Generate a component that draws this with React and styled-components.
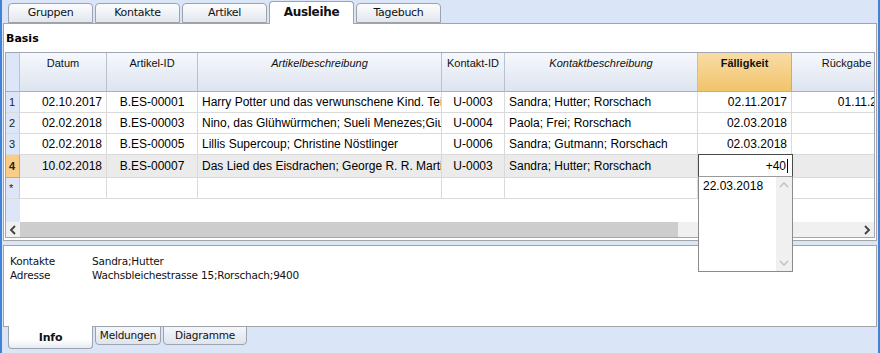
import React from 'react'
import styled, { createGlobalStyle } from 'styled-components'

const columns = [
  { key: 'datum', title: 'Datum', width: 87, align: 'right' },
  { key: 'artikelId', title: 'Artikel-ID', width: 91, align: 'center' },
  { key: 'artikel', title: 'Artikelbeschreibung', width: 244, align: 'left', italic: true },
  { key: 'kontaktId', title: 'Kontakt-ID', width: 63, align: 'center' },
  { key: 'kontakt', title: 'Kontaktbeschreibung', width: 193, align: 'left', italic: true },
  { key: 'faellig', title: 'Fälligkeit', width: 94, align: 'right', active: true },
  { key: 'rueckgabe', title: 'Rückgabe', width: 110, align: 'right' },
]

const rows = [
  { datum: '02.10.2017', artikelId: 'B.ES-00001', artikel: 'Harry Potter und das verwunschene Kind. Teil eins und zwei', kontaktId: 'U-0003', kontakt: 'Sandra; Hutter; Rorschach', faellig: '02.11.2017', rueckgabe: '01.11.2017' },
  { datum: '02.02.2018', artikelId: 'B.ES-00003', artikel: 'Nino, das Glühwürmchen; Sueli Menezes;Giuliano Ferri', kontaktId: 'U-0004', kontakt: 'Paola; Frei; Rorschach', faellig: '02.03.2018', rueckgabe: '' },
  { datum: '02.02.2018', artikelId: 'B.ES-00005', artikel: 'Lillis Supercoup; Christine Nöstlinger', kontaktId: 'U-0006', kontakt: 'Sandra; Gutmann; Rorschach', faellig: '02.03.2018', rueckgabe: '' },
  { datum: '10.02.2018', artikelId: 'B.ES-00007', artikel: 'Das Lied des Eisdrachen; George R. R. Martin', kontaktId: 'U-0003', kontakt: 'Sandra; Hutter; Rorschach', faellig: '', rueckgabe: '', current: true },
]

const topTabs = ['Gruppen', 'Kontakte', 'Artikel', 'Ausleihe', 'Tagebuch']
const bottomTabs = [
  { label: 'Info', width: 85 },
  { label: 'Meldungen', width: 66 },
  { label: 'Diagramme', width: 84 },
]

const GlobalStyle = createGlobalStyle`
  body {
    margin: 0;
    background: #dbe5f8;
    font-family: "Liberation Sans", Arial, sans-serif;
  }
`

const App = () => {
  return (
    <Window>
      <GlobalStyle />
      <TopTabBar>
        {topTabs.map((t) => (
          <TopTab key={t} active={t === 'Ausleihe'}>{t}</TopTab>
        ))}
      </TopTabBar>
      <MainPanel>
        <Title>Basis</Title>
        <Grid>
          <HeaderRow>
            <Corner />
            {columns.map((c) => (
              <HeadCell key={c.key} width={c.width} italic={c.italic} active={c.active}>
                {c.title}
              </HeadCell>
            ))}
          </HeaderRow>
          {rows.map((r, i) => (
            <Row key={i} current={r.current} height={r.current ? 23 : 21}>
              <RowHead current={r.current}>{i + 1}</RowHead>
              {columns.map((c) => (
                <Cell key={c.key} width={c.width} align={c.align}>{r[c.key]}</Cell>
              ))}
            </Row>
          ))}
          <Row height={21}>
            <RowHead>*</RowHead>
            {columns.map((c) => (
              <Cell key={c.key} width={c.width} />
            ))}
          </Row>
          <Filler />
          <HScroll>
            <ScrollArrow>
              <svg width="8" height="10" viewBox="0 0 8 10">
                <path d="M6 1 L2 5 L6 9" fill="none" stroke="#404040" strokeWidth="1.8" />
              </svg>
            </ScrollArrow>
            <Thumb />
            <Track />
            <ScrollArrow>
              <svg width="8" height="10" viewBox="0 0 8 10">
                <path d="M2 1 L6 5 L2 9" fill="none" stroke="#404040" strokeWidth="1.8" />
              </svg>
            </ScrollArrow>
          </HScroll>
        </Grid>
      </MainPanel>
      <InfoPanel>
        <InfoLine><InfoLabel>Kontakte</InfoLabel>Sandra;Hutter</InfoLine>
        <InfoLine><InfoLabel>Adresse</InfoLabel>Wachsbleichestrasse 15;Rorschach;9400</InfoLine>
      </InfoPanel>
      <BottomTabBar>
        {bottomTabs.map((t) => (
          <BottomTab key={t.label} width={t.width} active={t.label === 'Info'}>{t.label}</BottomTab>
        ))}
      </BottomTabBar>

      <Editor>
        <EditBox>+40<Caret /></EditBox>
        <DropList>
          <DropItem>22.03.2018</DropItem>
          <DropScroll>
            <svg width="10" height="6" viewBox="0 0 10 6">
              <path d="M1 5 L5 1 L9 5" fill="none" stroke="#c2c2c2" strokeWidth="1.5" />
            </svg>
            <svg width="10" height="6" viewBox="0 0 10 6">
              <path d="M1 1 L5 5 L9 1" fill="none" stroke="#c2c2c2" strokeWidth="1.5" />
            </svg>
          </DropScroll>
        </DropList>
      </Editor>
    </Window>
  )
}

export default App

const Window = styled.div`
  position: relative;
  width: 880px;
  height: 353px;
  box-sizing: border-box;
  border-left: 2px solid #3f82d8;
  border-right: 2px solid #3f82d8;
  background: #dbe5f8;
  display: flex;
  flex-direction: column;
  overflow: hidden;
`
const TopTabBar = styled.div`
  display: flex;
  align-items: flex-end;
  gap: 2px;
  height: 24px;
  padding-left: 6px;
  margin-bottom: -1px;
  position: relative;
  z-index: 1;
`
const TopTab = styled.div`
  box-sizing: border-box;
  width: 85px;
  height: ${(p) => (p.active ? '23px' : '20px')};
  margin-bottom: ${(p) => (p.active ? '0' : '1px')};
  border: 1px solid #9da3ad;
  border-bottom: ${(p) => (p.active ? 'none' : '1px solid #9da3ad')};
  border-radius: 4px 4px 0 0;
  background: ${(p) => (p.active ? '#fff' : 'linear-gradient(#fbfcfd, #e3e7ee)')};
  font-family: "DejaVu Sans", sans-serif;
  font-size: ${(p) => (p.active ? '12px' : '11px')};
  font-weight: ${(p) => (p.active ? 'bold' : 'normal')};
  color: #111;
  text-align: center;
  line-height: ${(p) => (p.active ? '20px' : '18px')};
  letter-spacing: -0.3px;
`
const MainPanel = styled.div`
  box-sizing: border-box;
  height: 218px;
  margin: 0 1px;
  border: 1px solid #a4a4a4;
  background: #fff;
  padding: 0 1px;
  display: flex;
  flex-direction: column;
`
const Title = styled.div`
  height: 28px;
  line-height: 29px;
  padding-left: 1px;
  font-family: "DejaVu Sans", sans-serif;
  font-weight: bold;
  font-size: 11px;
  color: #000;
`
const Grid = styled.div`
  box-sizing: border-box;
  height: 186px;
  border: 1px solid #a0a7b3;
  overflow: hidden;
  display: flex;
  flex-direction: column;
`
const HeaderRow = styled.div`
  display: flex;
  height: 39px;
  flex: none;
`
const Corner = styled.div`
  box-sizing: border-box;
  width: 14px;
  flex: none;
  background: #dce6f8;
  border-right: 1px solid #b8c3d4;
  border-bottom: 1px solid #a5b1c3;
`
const HeadCell = styled.div`
  box-sizing: border-box;
  width: ${(p) => p.width}px;
  flex: none;
  padding-top: 4px;
  text-align: center;
  font-size: 11px;
  font-style: ${(p) => (p.italic ? 'italic' : 'normal')};
  font-weight: ${(p) => (p.active ? 'bold' : 'normal')};
  color: #111;
  background: ${(p) => (p.active ? 'linear-gradient(#f9dca5, #f1c46c)' : 'linear-gradient(#f6f8fc, #dde4ef)')};
  border-right: 1px solid ${(p) => (p.active ? '#f1a33c' : '#b6c1d1')};
  border-bottom: 1px solid ${(p) => (p.active ? '#f1a33c' : '#a5b1c3')};
  white-space: nowrap;
`
const Row = styled.div`
  display: flex;
  flex: none;
  height: ${(p) => p.height}px;
  background: ${(p) => (p.current ? '#ebebeb' : '#fff')};
`
const RowHead = styled.div`
  box-sizing: border-box;
  width: 14px;
  flex: none;
  padding-left: 3px;
  background: ${(p) => (p.current ? '#fbcc86' : '#dce6f8')};
  border-right: 1px solid ${(p) => (p.current ? '#f1a33c' : '#c4cedd')};
  border-bottom: 1px solid ${(p) => (p.current ? '#f1a33c' : '#d9d9d9')};
  font-size: 11px;
  font-weight: ${(p) => (p.current ? 'bold' : 'normal')};
  color: #222;
  display: flex;
  align-items: center;
`
const Cell = styled.div`
  box-sizing: border-box;
  width: ${(p) => p.width}px;
  flex: none;
  padding: 0 4px;
  border-right: 1px solid #dadada;
  border-bottom: 1px solid #dadada;
  font-size: 12px;
  color: #000;
  text-align: ${(p) => p.align || 'left'};
  white-space: nowrap;
  overflow: hidden;
  text-overflow: clip;
  display: flex;
  align-items: center;
  justify-content: ${(p) => (p.align === 'right' ? 'flex-end' : p.align === 'center' ? 'center' : 'flex-start')};
`
const Filler = styled.div`
  flex: 1;
  background: linear-gradient(to right, #dce6f8 14px, #fff 14px);
`
const HScroll = styled.div`
  display: flex;
  height: 15px;
  flex: none;
  background: #f0f0f0;
`
const ScrollArrow = styled.div`
  width: 14px;
  flex: none;
  display: flex;
  align-items: center;
  justify-content: center;
`
const Thumb = styled.div`
  width: 658px;
  flex: none;
  background: #cdcdcd;
`
const Track = styled.div`
  flex: 1;
`
const InfoPanel = styled.div`
  box-sizing: border-box;
  height: 82px;
  margin: 4px 1px 0;
  border: 1px solid #a4a4a4;
  background: #fff;
  padding: 8px 0 0 6px;
  font-family: "DejaVu Sans", sans-serif;
  font-size: 10.5px;
  letter-spacing: -0.2px;
  color: #111;
`
const InfoLine = styled.div`
  display: flex;
  height: 14px;
  line-height: 14px;
`
const InfoLabel = styled.span`
  width: 82px;
  flex: none;
`
const BottomTabBar = styled.div`
  display: flex;
  align-items: flex-start;
  gap: 2px;
  padding-left: 6px;
  margin-top: -1px;
`
const BottomTab = styled.div`
  box-sizing: border-box;
  width: ${(p) => p.width}px;
  height: ${(p) => (p.active ? '23px' : '19px')};
  border: 1px solid #9da3ad;
  border-top: ${(p) => (p.active ? 'none' : '1px solid #9da3ad')};
  border-radius: 0 0 4px 4px;
  background: ${(p) => (p.active ? 'linear-gradient(#fff 60%, #e6ebf3)' : 'linear-gradient(#f4f6f9, #dfe4ec)')};
  font-family: "DejaVu Sans", sans-serif;
  font-size: ${(p) => (p.active ? '11px' : '10.5px')};
  font-weight: ${(p) => (p.active ? 'bold' : 'normal')};
  letter-spacing: -0.2px;
  text-align: center;
  line-height: ${(p) => (p.active ? '24px' : '16px')};
  color: #111;
`
const Editor = styled.div`
  position: absolute;
  left: 696px;
  top: 154px;
  width: 95px;
  z-index: 2;
`
const EditBox = styled.div`
  box-sizing: border-box;
  height: 23px;
  border: 1px solid #4a4a4a;
  border-bottom-color: #9a9a9a;
  background: #fff;
  display: flex;
  align-items: center;
  justify-content: flex-end;
  padding-right: 4px;
  font-size: 12px;
  color: #000;
`
const Caret = styled.span`
  display: inline-block;
  width: 1px;
  height: 14px;
  margin-left: 1px;
  background: #000;
`
const DropList = styled.div`
  box-sizing: border-box;
  height: 95px;
  border: 1px solid #8b8b8b;
  border-top: none;
  background: #fff;
  display: flex;
`
const DropItem = styled.div`
  flex: 1;
  padding: 2px 0 0 4px;
  font-size: 12px;
  color: #000;
`
const DropScroll = styled.div`
  width: 16px;
  flex: none;
  background: #f0f0f0;
  display: flex;
  flex-direction: column;
  justify-content: space-between;
  align-items: center;
  padding: 5px 0;
  box-sizing: border-box;
`
